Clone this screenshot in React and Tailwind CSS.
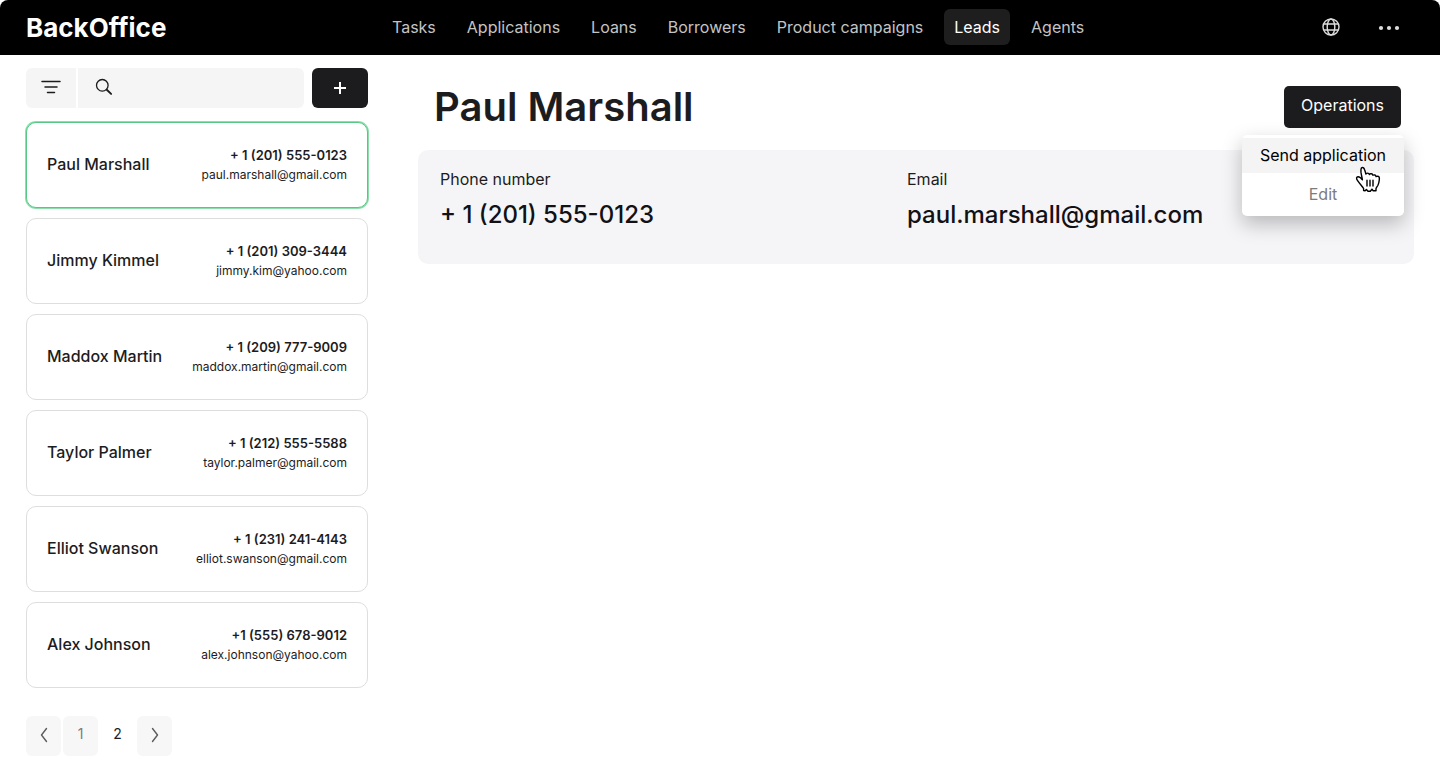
import { useState } from 'react';

const navItems = ['Tasks', 'Applications', 'Loans', 'Borrowers', 'Product campaigns', 'Leads', 'Agents'];

const leads = [
  { id: 1, name: 'Paul Marshall', phone: '+ 1 (201) 555-0123', email: 'paul.marshall@gmail.com' },
  { id: 2, name: 'Jimmy Kimmel', phone: '+ 1 (201) 309-3444', email: 'jimmy.kim@yahoo.com' },
  { id: 3, name: 'Maddox Martin', phone: '+ 1 (209) 777-9009', email: 'maddox.martin@gmail.com' },
  { id: 4, name: 'Taylor Palmer', phone: '+ 1 (212) 555-5588', email: 'taylor.palmer@gmail.com' },
  { id: 5, name: 'Elliot Swanson', phone: '+ 1 (231) 241-4143', email: 'elliot.swanson@gmail.com' },
  { id: 6, name: 'Alex Johnson', phone: '+1 (555) 678-9012', email: 'alex.johnson@yahoo.com' },
];

function GlobeIcon() {
  return (
    <svg viewBox="0 0 18 18" className="h-[18px] w-[18px]" fill="none" stroke="currentColor" strokeWidth="1.4">
      <circle cx="9" cy="9" r="8" />
      <ellipse cx="9" cy="9" rx="3.8" ry="8" />
      <path d="M1.8 6h14.4M1.8 12h14.4" />
    </svg>
  );
}

function DotsIcon() {
  return (
    <svg viewBox="0 0 22 6" className="h-[6px] w-[22px]" fill="currentColor">
      <circle cx="3" cy="3" r="2.1" />
      <circle cx="11" cy="3" r="2.1" />
      <circle cx="19" cy="3" r="2.1" />
    </svg>
  );
}

function FilterIcon() {
  return (
    <svg viewBox="0 0 20 14" className="h-[14px] w-[20px]" fill="none" stroke="currentColor" strokeWidth="1.5" strokeLinecap="round">
      <path d="M1 1.5h18M4 7h12M6.5 12.5h7" />
    </svg>
  );
}

function SearchIcon() {
  return (
    <svg viewBox="0 0 18 18" className="h-[18px] w-[18px] shrink-0" fill="none" stroke="currentColor" strokeLinecap="round">
      <circle cx="7.3" cy="7.3" r="5.8" strokeWidth="1.3" />
      <path d="M11.8 11.8l4.3 4.1" strokeWidth="1.9" />
    </svg>
  );
}

function ChevronIcon({ flip }) {
  return (
    <svg
      viewBox="0 0 10 16"
      className={`h-4 w-[10px] ${flip ? 'rotate-180' : ''}`}
      fill="none"
      stroke="currentColor"
      strokeWidth="1.4"
      strokeLinecap="round"
      strokeLinejoin="round"
    >
      <path d="M7.5 1.5L2.5 8l5 6.5" />
    </svg>
  );
}

function HandPointer() {
  return (
    <svg
      viewBox="0 0 26 28"
      aria-hidden="true"
      className="pointer-events-none absolute top-[30px] right-[23px] h-[28px] w-[26px]"
      fill="white"
      stroke="black"
      strokeWidth="1.4"
      strokeLinejoin="round"
      strokeLinecap="round"
    >
      <path d="M8.6 25.500V23.500C7.500 21.600 4.800 19 3 16.200c-1-1.600-1.700-2.200-1.400-3.400.4-1.300 2.100-1.300 3.300-.4 1.100.8 1.900 1.900 2.500 2.400-.3-2-1.100-5-1.400-7.400C5.800 5 5.600 3.200 6.900 2.600c1.300-.5 2.200.5 2.700 2.200.5 1.400 1 3.200 1.300 4.300.3-1.200 2.900-1.600 3.500.4.6-1.100 3.100-1 3.600.7 1-.7 2.800-.3 3 1.300.1.500 1.200-.7 2.400-.2 1.500.6 1 2.600.8 4.200-.2 2.200-.7 3.700-1.400 5-.8 1.300-1.600 2-1.800 3.200v2h-3l-1-1.500-1.700 2h-2.300l-1.600-1.700-1.300 1.200z" />
      <path d="M12 15.300v5.700M15 15.300v5.700M18 15.300v5.700" fill="none" />
    </svg>
  );
}

function Header() {
  return (
    <header className="flex h-[55px] items-center rounded-t-lg bg-black px-[26px]">
      <a href="#" className="w-[356px] shrink-0 text-[26px] leading-8 font-bold text-white">
        BackOffice
      </a>
      <nav className="flex gap-[11px] pb-0.5">
        {navItems.map((item) => (
          <a
            key={item}
            href="#"
            className={`flex h-9 items-center rounded-md px-[10px] text-base whitespace-nowrap ${
              item === 'Leads' ? 'bg-[#1e1e1f] text-white' : 'text-[#c4c4c4]'
            }`}
          >
            {item}
          </a>
        ))}
      </nav>
      <div className="ml-auto flex items-center gap-[38px] pr-3.5 pb-0.5 text-[#dcdcdc]">
        <button type="button" aria-label="Language">
          <GlobeIcon />
        </button>
        <button type="button" aria-label="More" className="pt-0.5">
          <DotsIcon />
        </button>
      </div>
    </header>
  );
}

function LeadCard({ lead, selected, onSelect }) {
  return (
    <button
      type="button"
      onClick={onSelect}
      className={`flex h-[86px] w-full items-center justify-between rounded-[10px] border bg-white px-5 text-[#1c1c1e] ${
        selected ? 'border-[#57c785] ring-1 ring-[#8be0ab]' : 'border-[#dedede]'
      }`}
    >
      <span className="pb-0.5 text-base font-medium">{lead.name}</span>
      <span className="flex flex-col text-right text-xs leading-5">
        <span className="text-[13px] font-semibold">{lead.phone}</span>
        <span>{lead.email}</span>
      </span>
    </button>
  );
}

function Operations() {
  const [open, setOpen] = useState(true);

  return (
    <div className="relative">
      <button
        type="button"
        onClick={() => setOpen(!open)}
        className="h-[42px] rounded-[5px] bg-[#1c1c1e] px-[17px] pb-1 text-base text-white"
      >
        Operations
      </button>
      {open && (
        <div className="absolute top-[49px] right-[-3px] w-[162px] rounded-[5px] bg-white pt-[3px] pb-1 text-base shadow-[0_8px_20px_rgba(0,0,0,0.25)]">
          <button type="button" className="block h-[35px] w-full bg-[#f4f4f4] pb-0.5 text-black">
            Send application
          </button>
          <button type="button" className="block h-[39px] w-full pt-0.5 text-[#7c7c7c]">
            Edit
          </button>
          <HandPointer />
        </div>
      )}
    </div>
  );
}

export default function App() {
  const [selectedId, setSelectedId] = useState(1);
  const selected = leads.find((lead) => lead.id === selectedId);

  return (
    <div className="min-h-screen bg-white font-['Inter',sans-serif] text-[#1c1c1e]">
      <Header />
      <div className="flex gap-[50px] px-[26px]">
        <aside className="w-[342px] shrink-0 pt-[13px] pb-4">
          <div className="flex h-10 gap-2">
            <div className="flex flex-1 gap-0.5">
              <button type="button" aria-label="Filter" className="grid w-[50px] place-items-center rounded-l-md bg-[#f5f5f6] pb-0.5">
                <FilterIcon />
              </button>
              <label className="flex flex-1 items-center gap-2 rounded-r-md bg-[#f5f5f6] px-[17px] pb-0.5">
                <SearchIcon />
                <input type="text" aria-label="Search" className="w-full min-w-0 bg-transparent text-sm outline-none" />
              </label>
            </div>
            <button type="button" aria-label="Add lead" className="grid w-14 place-items-center rounded-md bg-[#1c1c1e] text-white">
              <svg viewBox="0 0 12 12" className="h-3 w-3" stroke="currentColor" strokeWidth="2">
                <path d="M6 0v12M0 6h12" />
              </svg>
            </button>
          </div>

          <div className="mt-3.5 flex flex-col gap-[10px]">
            {leads.map((lead) => (
              <LeadCard key={lead.id} lead={lead} selected={lead.id === selectedId} onSelect={() => setSelectedId(lead.id)} />
            ))}
          </div>

          <nav aria-label="Pages" className="mt-7 flex h-10 gap-0.5 text-sm">
            <button type="button" aria-label="Previous page" className="grid w-[35px] place-items-center rounded-md bg-[#f7f7f7] pb-0.5 text-[#5c5c5c]">
              <ChevronIcon />
            </button>
            <button type="button" className="w-[35px] rounded-md bg-[#f7f7f7] pb-1 text-[#7c7c7c]">
              1
            </button>
            <button type="button" className="w-[35px] rounded-md pb-1">
              2
            </button>
            <button type="button" aria-label="Next page" className="grid w-[35px] place-items-center rounded-md bg-[#f7f7f7] pb-0.5 text-[#5c5c5c]">
              <ChevronIcon flip />
            </button>
          </nav>
        </aside>

        <main className="min-w-0 flex-1 pt-[31px]">
          <div className="flex h-16 items-start justify-between pr-[13px] pl-4">
            <h1 className="text-[40px] leading-[42px] font-semibold">{selected.name}</h1>
            <Operations />
          </div>
          <dl className="grid h-[114px] grid-cols-[467px_1fr] rounded-[10px] bg-[#f5f5f7] px-[22px] pt-[17px]">
            <div>
              <dt className="text-base leading-6">Phone number</dt>
              <dd className="mt-2 text-2xl leading-8 font-medium text-[#111116]">{selected.phone}</dd>
            </div>
            <div>
              <dt className="text-base leading-6">Email</dt>
              <dd className="mt-2 text-2xl leading-8 font-medium text-[#111116]">{selected.email}</dd>
            </div>
          </dl>
        </main>
      </div>
    </div>
  );
}
